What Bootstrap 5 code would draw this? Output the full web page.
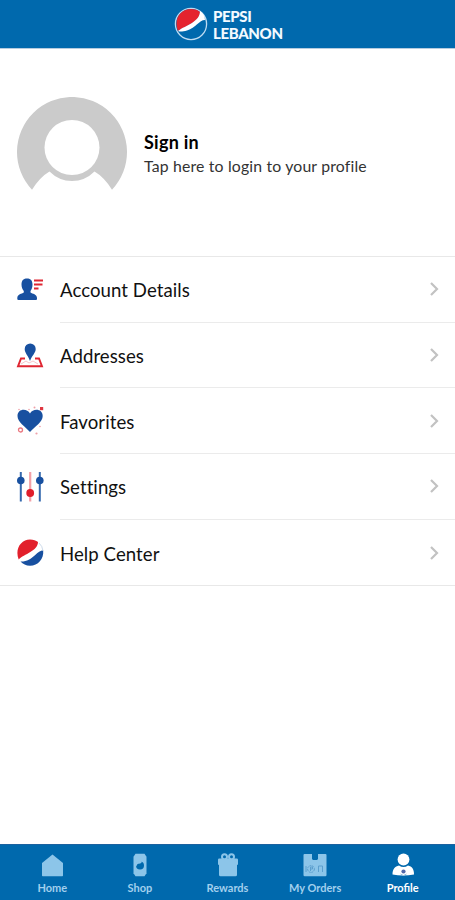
<!DOCTYPE html>
<html lang="en">
<head>
<meta charset="utf-8">
<meta name="viewport" content="width=device-width, initial-scale=1">
<title>Pepsi Lebanon</title>
<link href="https://cdn.jsdelivr.net/npm/bootstrap@5.3.0/dist/css/bootstrap.min.css" rel="stylesheet">
<style>
body{font-family:Lato,"Liberation Sans",sans-serif;color:#111;background:#fff}
svg{display:block;flex:none}
.top-bar{height:48px;background:#0069ad;box-shadow:0 1px 0 #b5cce0;padding-left:174px}
.brand-text{font-size:15px;line-height:17px;font-weight:900;letter-spacing:-.35px;color:#f3faff;padding-top:2px;margin-left:5px}
.profile-head{height:208px;padding:49px 0 0 17px}
.who{margin-left:17px;padding-top:34px}
.who-title{font-size:18px;line-height:22px;font-weight:700;color:#000;letter-spacing:.25px}
.who-sub{font-size:15.8px;line-height:20px;color:#333;margin-top:3px;letter-spacing:.17px}
.menu-list{border-top:1px solid #e8e8e8;border-bottom:1px solid #e8e8e8}
.menu-row{height:65.7px;padding-left:16px;color:#111}
.menu-label{height:100%;margin-left:16px;padding-right:15px;font-size:18.6px;padding-top:4px;letter-spacing:.06px;font-variant-ligatures:none}
.menu-label svg{margin-top:-4px}
.menu-row:not(:last-child) .menu-label{border-bottom:1px solid #ebebeb}
.tabs{height:56px;background:#0069ad;border-top:1px solid #1b62a0}
.tab-item{width:87.6px;padding-top:8px;color:#a2d0ee;font-size:11px;line-height:14px;font-weight:700}
.tab-item svg{margin-bottom:4px}
.tab-item.active{color:#fff}
</style>
<script src="https://cdn.jsdelivr.net/npm/bootstrap@5.3.0/dist/js/bootstrap.bundle.min.js"></script>
</head>
<body>
<div class="d-flex flex-column vh-100 overflow-hidden">
<header class="top-bar d-flex align-items-center flex-shrink-0">
<svg width="34" height="34" viewBox="0 0 34 34"><circle cx="17" cy="17" r="15.6" fill="#0069ad" stroke="#bddcf2" stroke-width="1.3"/><path d="M4 24C-1 11 7 2 17 2c4 0 7 1 9 3 0 10-13 13-22 19z" fill="#e5232e"/><path d="M26 4c3 2 5 5 5 9-6 0-9 8-18 10.500-4 1-7 1.500-9 .5C12 18 26 15 26 4z" fill="#fff"/></svg>
<div class="brand-text">PEPSI<br>LEBANON</div>
</header>
<section class="profile-head d-flex align-items-start flex-shrink-0">
<svg width="110" height="94" viewBox="0 0 110 94"><path d="M15 92.700A55 55 0 1 1 95 92.700Q87 80 77.500 74.500Q68 84 55 84T32.500 74.500Q23 80 15 92.700z" fill="#cbcbcb"/><circle cx="55" cy="50.500" r="27.500" fill="#fff"/></svg>
<div class="who"><div class="who-title">Sign in</div><div class="who-sub">Tap here to login to your profile</div></div>
</section>
<nav class="menu-list flex-shrink-0">
<a class="menu-row d-flex align-items-center text-decoration-none" href="#">
<svg width="28" height="30" viewBox="0 0 28 30"><path d="M5.500 9.500C5.500 5 8 3.500 11 3.500S16.500 5 16.500 9.500c0 3-.8 5-2 6.500v1.500c2 1.500 6.500 1.500 6.500 5.500v1q0 1-1 1H2.500q-1.200 0-1.200-1v-1c0-4 4.500-4 6.500-5.500V16C6.500 14.500 5.500 12.500 5.500 9.500z" fill="#1850a0"/><path d="M18 5.500H27M18 9.500H26.500M18 13.500H22.500" stroke="#df2632" stroke-width="2"/></svg>
<span class="menu-label d-flex flex-grow-1 align-items-center justify-content-between">Account Details<svg width="11" height="16" viewBox="0 0 11 16"><path d="M2 2L8 8L2 14" fill="none" stroke="#c2c2c2" stroke-width="2.200"/></svg></span></a>
<a class="menu-row d-flex align-items-center text-decoration-none" href="#">
<svg width="28" height="30" viewBox="0 0 28 30"><path d="M9 17.500H5L2 25.300H26L23 17.500H19" fill="none" stroke="#df2632" stroke-width="1.900"/><path d="M5 23l5-3 3 2 4-2 5 3" fill="none" stroke="#f5b6bc" stroke-width=".8"/><path d="M14 20C12 14.500 8.700 12 8.700 8a5.500 5.500 0 0 1 11 0C19.700 12 16 14.500 14 20z" fill="#1850a0"/></svg>
<span class="menu-label d-flex flex-grow-1 align-items-center justify-content-between">Addresses<svg width="11" height="16" viewBox="0 0 11 16"><path d="M2 2L8 8L2 14" fill="none" stroke="#c2c2c2" stroke-width="2.200"/></svg></span></a>
<a class="menu-row d-flex align-items-center text-decoration-none" href="#">
<svg width="28" height="30" viewBox="0 0 28 30"><path d="M14 26C9 20.500 1.500 16 1.500 10 1.500 2.500 11 2 14 7.500c3-5.500 12.700-5 12.700 2.500C26.700 16 19 20.500 14 26z" fill="#1850a0"/><circle cx="4.500" cy="24" r="2" fill="none" stroke="#ea7880" stroke-width="1.300"/><rect x="24" y="1" width="3.200" height="3.200" fill="#df3742"/><g fill="#efa0a8"><circle cx="18.500" cy="1.500" r="1"/><circle cx="13" cy="3.500" r=".8"/><circle cx="3" cy="3.500" r=".8"/><circle cx="20.500" cy="27.500" r="1.100"/><circle cx="24" cy="20.500" r=".8"/></g></svg>
<span class="menu-label d-flex flex-grow-1 align-items-center justify-content-between">Favorites<svg width="11" height="16" viewBox="0 0 11 16"><path d="M2 2L8 8L2 14" fill="none" stroke="#c2c2c2" stroke-width="2.200"/></svg></span></a>
<a class="menu-row d-flex align-items-center text-decoration-none" href="#">
<svg width="28" height="30" viewBox="0 0 28 30"><path d="M4.800 0V29.500M23.800 0V29.500" stroke="#3569ae" stroke-width="2"/><path d="M14.200 0V29.500" stroke="#f3a1a8" stroke-width="2.200"/><g fill="#1850a0"><circle cx="4.800" cy="8.500" r="3.800"/><circle cx="23.800" cy="8.500" r="3.800"/></g><circle cx="14.200" cy="21" r="3.900" fill="#e01d2a"/></svg>
<span class="menu-label d-flex flex-grow-1 align-items-center justify-content-between">Settings<svg width="11" height="16" viewBox="0 0 11 16"><path d="M2 2L8 8L2 14" fill="none" stroke="#c2c2c2" stroke-width="2.200"/></svg></span></a>
<a class="menu-row d-flex align-items-center text-decoration-none" href="#">
<svg width="28" height="30" viewBox="0 0 28 30"><path d="M2.700 21.500C-1.500 11 5 1.500 14 1.500c3.500 0 6 1 8 2.500C22 13 8 16 2.700 21.500z" fill="#e2202c"/><path d="M4.500 23.500C17 24 20 12.500 27.200 12.500 28 21 22 27.700 14 27.700c-4 0-7-1.500-9.500-4.200z" fill="#1850a0"/><path d="M23 5q3.500 3 4 8" fill="none" stroke="#bfd0e5" stroke-width=".8"/></svg>
<span class="menu-label d-flex flex-grow-1 align-items-center justify-content-between">Help Center<svg width="11" height="16" viewBox="0 0 11 16"><path d="M2 2L8 8L2 14" fill="none" stroke="#c2c2c2" stroke-width="2.200"/></svg></span></a>
</nav>
<footer class="tabs d-flex justify-content-center mt-auto flex-shrink-0">
<div class="tab-item d-flex flex-column align-items-center"><svg width="24" height="24" viewBox="0 0 24 24"><path d="M12.500 1.500L23 10V22.500q0 .7-.7.700H2.700q-.7 0-.7-.7V10z" fill="#8cc5e9"/></svg>Home</div>
<div class="tab-item d-flex flex-column align-items-center"><svg width="24" height="24" viewBox="0 0 24 24"><path d="M7.500.8h9l2 3v16.500l-2 3h-9l-2-3V3.800z" fill="#8cc5e9"/><circle cx="12" cy="12.500" r="4" fill="#0069ad"/><path d="M8.500 13.500C9 9 13 12 14 8.500l-3-1-4 3z" fill="#8cc5e9"/></svg>Shop</div>
<div class="tab-item d-flex flex-column align-items-center"><svg width="24" height="24" viewBox="0 0 24 24"><path d="M3.200 5.500h17.600q1.200 0 1.200 1.200v5h-1v10q0 1.500-1.500 1.500h-15Q3 23.200 3 21.700v-10H2v-5q0-1.200 1.200-1.200z" fill="#8cc5e9"/><g fill="#0069ad" stroke="#8cc5e9" stroke-width="2"><circle cx="8.500" cy="3.800" r="2.500"/><circle cx="15.500" cy="3.800" r="2.500"/></g></svg>Rewards</div>
<div class="tab-item d-flex flex-column align-items-center"><svg width="24" height="24" viewBox="0 0 24 24"><path d="M1.500 1H9v5l1 1h4l1-1V1h7.500q1 0 1 1v20q0 1.200-1.200 1.200H1.700Q.5 23.200.5 22V2q0-1 1-1z" fill="#8cc5e9"/><g fill="none" stroke="#5b9fce"><circle cx="8" cy="16" r="3.400" stroke-dasharray="2 .8"/><path d="M7.500 18v-4h2v2h-2M3 13v6M15.500 19v-6h4v6"/></g></svg>My Orders</div>
<div class="tab-item active d-flex flex-column align-items-center"><svg width="24" height="24" viewBox="0 0 24 24"><circle cx="12.500" cy="6.500" r="5.900" fill="#fff"/><path d="M1.500 21.500C1.500 16 4 13.500 8 12.500q4.500 3 9 0c4 1 6 3.500 6 9q-11 2-21.500 0z" fill="#fff"/><circle cx="12.500" cy="18.500" r="2.100" fill="#5269aa"/><path d="M9.500 21q3 3 6 0" fill="none" stroke="#a0c6df"/></svg>Profile</div>
</footer>
</div>
</body>
</html>
